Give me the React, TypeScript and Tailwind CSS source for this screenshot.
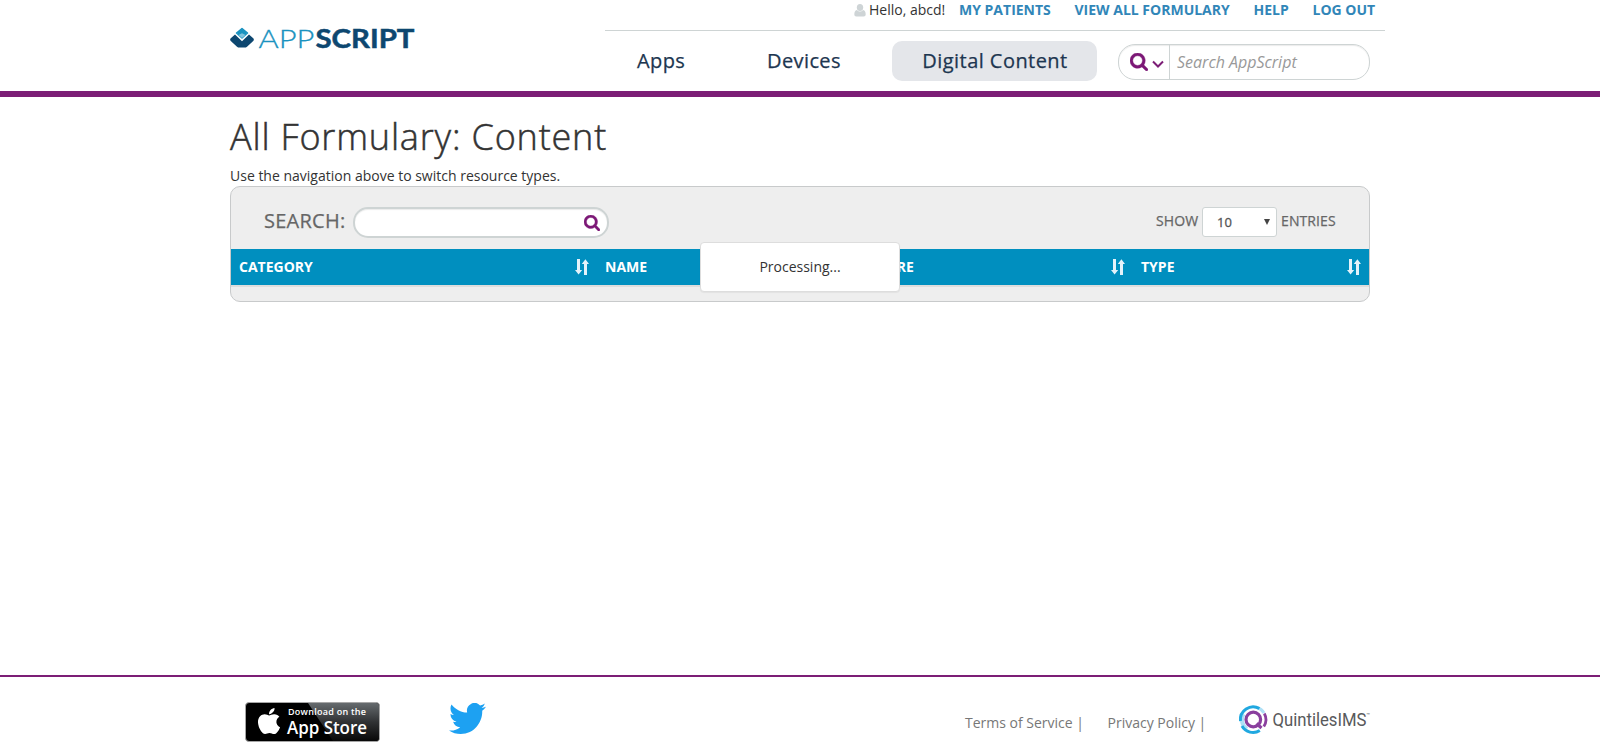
import React from "react";
import { FaApple } from "react-icons/fa";

const AppScriptLogo = () => (
  <svg width="186" height="24" viewBox="0 0 186 24" className="block overflow-visible">
    <path d="M12 1.500 17.500 6 12 11 6.500 6Z" fill="#1b93c0" stroke="#1b93c0" strokeWidth="1.500" strokeLinejoin="round" />
    <path d="M8.500 8 12 6.200 15.500 8 12 11Z" fill="#7fc3de" />
    <path d="M5 7.500 12 14.200 19 7.500 23.500 11.500Q24.300 12.500 23.500 13.700L17 19.700Q16 20.600 14.500 20.600H9.500Q8 20.600 7 19.700L.5 13.700Q-.3 12.500 .5 11.500Z" fill="#0d4770" />
    <text x="28.500" y="21" fontFamily="Lato, sans-serif" fontWeight="300" fontSize="26" fill="#1b93c0" stroke="#1b93c0" strokeWidth="0.300" textLength="56" lengthAdjust="spacingAndGlyphs">APP</text>
    <text x="85.500" y="21" fontFamily="Lato, sans-serif" fontWeight="700" fontSize="26" fill="#0d4770" stroke="#0d4770" strokeWidth="0.500" textLength="99" lengthAdjust="spacingAndGlyphs">SCRIPT</text>
  </svg>
);

const SearchIcon = ({ className }: { className: string }) => (
  <svg viewBox="0 128 1664 1664" className={className} fill="#7c1876">
    <path stroke="#7c1876" strokeWidth="40" d="M1152 832q0-185-131.500-316.500t-316.500-131.500-316.500 131.500-131.500 316.500 131.500 316.500 316.500 131.500 316.500-131.500 131.500-316.500zm512 832q0 52-38 90t-90 38q-54 0-90-38l-343-342q-179 124-399 124-143 0-273.500-55.500t-225-150-150-225-55.500-273.500 55.500-273.500 150-225 225-150 273.500-55.500 273.500 55.500 225 150 150 225 55.500 273.500q0 220-124 399l343 343q37 37 37 90z" />
  </svg>
);

const UserIcon = () => (
  <svg width="12" height="13" viewBox="0 0 12 13" fill="#ced4d6" className="block">
    <ellipse cx="6" cy="3.500" rx="3.200" ry="3.500" />
    <path d="M2.800 6Q6 9 9.200 6Q11.700 6.800 11.700 10.500Q11.700 12.600 9.800 12.600H2.200Q.3 12.600.3 10.500Q.3 6.800 2.800 6Z" />
  </svg>
);

const SortIcon = () => (
  <svg width="14" height="16" viewBox="0 0 14 16" fill="#e4f2fa" className="block shrink-0">
    <path d="M2 0H5V11H7.200L3.600 15.600 0 11H2Z" />
    <path d="M9 16H12V5H14L10.400.2 6.800 5H9Z" />
  </svg>
);

const StoreBadge = () => (
  <div className="h-10 w-[135px] overflow-hidden rounded-[4px] border border-[#a6a6a6] bg-black">
    <svg width="133" height="38" viewBox="0 0 133 38" className="block">
      <defs>
        <linearGradient id="gloss" x1="0" y1="0" x2="0" y2="1">
          <stop offset="0" stopColor="#666b6e" />
          <stop offset="0.500" stopColor="#303234" />
          <stop offset="1" stopColor="#080808" />
        </linearGradient>
      </defs>
      <path d="M62 0H133V38H87Z" fill="url(#gloss)" />
      <text x="42" y="12" fontFamily="'Open Sans', sans-serif" fontWeight="600" fontSize="9" fill="#fff" textLength="78" lengthAdjust="spacing">Download on the</text>
      <text x="41" y="31" fontFamily="'Open Sans', sans-serif" fontWeight="600" fontSize="17.500" fill="#fff" textLength="80" lengthAdjust="spacingAndGlyphs">App Store</text>
      <g transform="translate(8 3)">
        <FaApple size={30} color="#fff" />
      </g>
    </svg>
  </div>
);

const Bird = () => (
  <svg width="37" height="31" viewBox="0 0 24 19.500" preserveAspectRatio="none" className="block">
    <path
      fill="#1da1f2"
      d="M23.953 2.320a10 10 0 01-2.825.775 4.958 4.958 0 002.163-2.723c-.951.555-2.005.959-3.127 1.184a4.920 4.920 0 00-8.384 4.482C7.690 5.845 4.067 3.880 1.640.907a4.822 4.822 0 00-.666 2.475c0 1.710.870 3.213 2.188 4.096a4.904 4.904 0 01-2.228-.616v.060a4.923 4.923 0 003.946 4.827 4.996 4.996 0 01-2.212.085 4.936 4.936 0 004.604 3.417 9.867 9.867 0 01-6.102 2.105c-.390 0-.779-.023-1.170-.067a13.995 13.995 0 007.557 2.209c9.053 0 13.998-7.496 13.998-13.985 0-.210 0-.420-.015-.630A9.935 9.935 0 0024 2.340z"
    />
  </svg>
);

const QuintilesLogo = () => (
  <svg width="134" height="30" viewBox="0 0 134 30" className="block overflow-visible">
    <g fill="none">
      <path d="M18 2.500A12.700 12.700 0 0 1 25 8" stroke="#aee0f6" strokeWidth="3" />
      <path d="M4.500 9A11 11 0 0 0 8 24" stroke="#aee0f6" strokeWidth="4" />
      <path d="M1.500 16A12.700 12.700 0 0 1 20.400 3.500" stroke="#20a8e0" strokeWidth="3" />
      <path d="M3 21A12.700 12.700 0 0 0 20.800 25.600" stroke="#20a8e0" strokeWidth="3" />
      <circle cx="14.300" cy="14.500" r="7.300" stroke="#8a3f9e" strokeWidth="3.200" />
      <path d="M17.500 18.500 22.500 23" stroke="#8a3f9e" strokeWidth="3.200" />
      <path d="M25.300 8.500Q29 15 24.800 21.500" stroke="#8a3f9e" strokeWidth="2.800" />
    </g>
    <text x="33.500" y="21" fontFamily="Roboto, sans-serif" fontSize="18.500" fill="#58595b" textLength="94" lengthAdjust="spacingAndGlyphs">QuintilesIMS</text>
    <text x="127.500" y="12" fontFamily="Roboto, sans-serif" fontSize="6" fill="#58595b">™</text>
  </svg>
);

export default function App() {
  return (
    <div className="flex h-[755px] w-[1600px] flex-col overflow-hidden bg-white font-['Open_Sans',sans-serif] text-sm text-[#333]">
      <header className="h-[97px] border-b-[6px] border-[#7c1e76]">
        <div className="ml-[230px] flex w-[1155px]">
          <div className="w-[375px] pt-[27px]">
            <AppScriptLogo />
          </div>
          <div className="w-[780px]">
            <div className="flex h-[31px] border-b border-[#ced4d4] pl-[249px] leading-5 whitespace-nowrap">
              <div className="w-[15px] pt-1"><UserIcon /></div>
              <div className="w-[90px]">Hello, abcd!</div>
              <nav className="flex font-bold text-[#3186b8]">
                <a className="w-[115.500px]">MY PATIENTS</a>
                <a className="w-[179px]">VIEW ALL FORMULARY</a>
                <a className="w-[59px]">HELP</a>
                <a>LOG OUT</a>
              </nav>
            </div>
            <div className="flex pt-[10px] text-xl leading-10 whitespace-nowrap text-[#1d3650]">
              <a className="w-[130px] pl-8 tracking-[0.4px] [-webkit-text-stroke:0.25px_#1d3650]">Apps</a>
              <a className="w-[157px] pl-8 tracking-[0.4px] [-webkit-text-stroke:0.25px_#1d3650]">Devices</a>
              <a className="h-10 w-[205px] rounded-[10px] bg-[#e4e6ea] pl-px text-center tracking-[0.45px] [-webkit-text-stroke:0.25px_#1d3650]">Digital Content</a>
              <div className="mt-[3px] ml-[21px] flex h-9 w-[252px] rounded-[17px] border border-[#ced4d4] bg-white shadow-[inset_0_1px_1px_rgba(0,0,0,0.08)]">
                <div className="flex w-[51px] items-center gap-[4px] border-r border-[#ced4d4] pl-[11px]">
                  <SearchIcon className="size-[18px] shrink-0" />
                  <svg width="12" height="9" viewBox="0 0 12 9" className="mt-1 block shrink-0"><path d="M1 1.500 6 6.500 11 1.500" fill="none" stroke="#7c1e76" strokeWidth="2" /></svg>
                </div>
                <span className="pl-[7px] text-base leading-[34px] text-[#999] italic">Search AppScript</span>
              </div>
            </div>
          </div>
        </div>
      </header>

      <main className="ml-[230px] h-[578px] w-[1140px] pt-5">
        <h1 className="h-[49px] text-4xl leading-10 font-light tracking-[0.82px] whitespace-nowrap [-webkit-text-stroke:0.5px_#333]">All Formulary: Content</h1>
        <p className="h-5 leading-5">Use the navigation above to switch resource types.</p>
        <section className="relative h-[116px] rounded-[10px] border border-[#c8cacb] bg-[#eee]">
          <div className="flex h-[62px] pl-[33px] whitespace-nowrap text-[#666]">
            <span className="w-[89px] pt-[20px] text-xl leading-[28px] tracking-[0.25px] [-webkit-text-stroke:0.25px_#666]">SEARCH:</span>
            <div className="mt-5 flex h-[31px] w-[256px] items-center justify-end rounded-[15px] border-2 border-[#ced4d4] bg-white pr-[7px] shadow-[inset_0_1px_1px_rgba(0,0,0,0.08)]">
              <SearchIcon className="size-4" />
            </div>
            <span className="ml-[547px] w-[46px] pt-[24px] leading-5 tracking-[0.1px] [-webkit-text-stroke:0.25px_#666]">SHOW</span>
            <div className="mt-5 flex h-[30px] w-[75px] items-center justify-between rounded-[3px] border border-[#ced4d4] bg-white pr-[6px] pl-[14px] text-[13px] text-[#555] [-webkit-text-stroke:0.3px_#555]">
              <span>10</span>
              <svg width="6" height="6" viewBox="0 0 6 6" className="block"><path d="M0 0H6L3 6Z" fill="#444" /></svg>
            </div>
            <span className="ml-1 pt-[24px] leading-5 tracking-[0.1px] [-webkit-text-stroke:0.25px_#666]">ENTRIES</span>
          </div>
          <div className="grid h-[38px] grid-cols-[366px_263px_273px_236px] border-b-2 border-[#ddd] bg-[#008fbf] font-bold text-white">
            <div className="flex items-center justify-between pr-[8px] pl-2">CATEGORY<SortIcon /></div>
            <div className="flex items-center justify-between pl-2">NAME</div>
            <div className="flex items-center justify-between pr-[8px] pl-[9px]"><span>SCORE</span><SortIcon /></div>
            <div className="flex items-center justify-between pr-2 pl-2">TYPE<SortIcon /></div>
          </div>
          <div className="absolute top-[55px] left-[469px] h-[50px] w-[200px] rounded-[4px] border border-[#ddd] bg-white text-center leading-[48px] shadow-[0_1px_1px_rgba(0,0,0,0.05)]">Processing...</div>
        </section>
      </main>

      <footer className="flex h-20 border-t-2 border-[#7c1e76] pl-[245px] text-[#777]">
        <div className="w-[204px] pt-[25px]"><StoreBadge /></div>
        <div className="w-[516px] pt-[26px]"><Bird /></div>
        <span className="w-[142.500px] pt-9 leading-5">Terms of Service |</span>
        <span className="w-[131.500px] pt-9 leading-5">Privacy Policy |</span>
        <div className="pt-[28px]"><QuintilesLogo /></div>
      </footer>
    </div>
  );
}
